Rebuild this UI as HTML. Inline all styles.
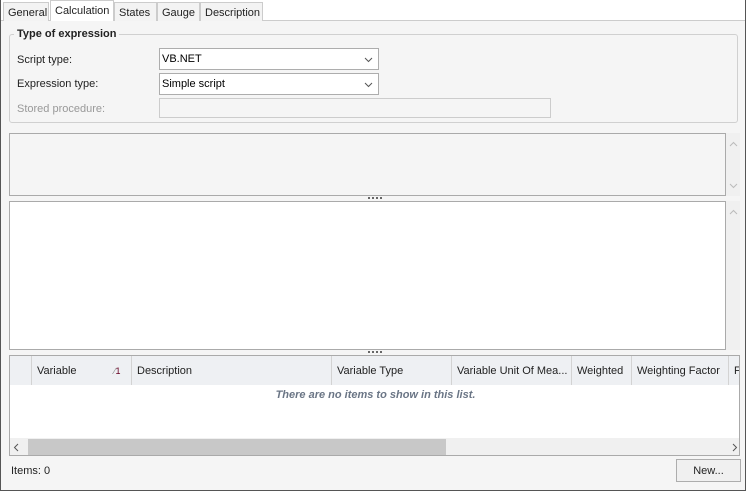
<!DOCTYPE html><html><head><style>
*{box-sizing:border-box;margin:0;padding:0}
body{width:746px;height:491px;position:relative;overflow:hidden;background:#fff;font:11px "Liberation Sans",sans-serif;color:#222}
.a{position:absolute}
.tab{position:absolute;top:2px;height:19px;border:1px solid #ccc;border-bottom:none;background:#f3f3f3;padding:4px 0 0 4px;font-size:11px}
.lbl{position:absolute;left:17px;font-size:11px}
.cb{position:absolute;left:159px;width:220px;height:22px;border:1px solid #adadad;background:#fff;padding:4px 0 0 2px;font-size:11px;color:#000}
.cb svg{position:absolute;right:5px;top:8px}
.hd{position:absolute;top:0;height:29px;border-right:1px solid #d3d3d3;padding:9px 0 0 5px;font-size:11px;white-space:nowrap;overflow:hidden}
.dots{position:absolute;left:368px;width:14px;height:2px;background:repeating-linear-gradient(90deg,#666 0 2px,transparent 2px 4px)}
</style></head><body>
<div class="a" style="left:0;top:0;width:746px;height:491px;border:1px solid #555;border-top:none"></div>
<div class="a" style="left:1px;top:20px;width:744px;height:470px;background:#f5f5f5;border-top:1px solid #ccc"></div>
<div class="tab" style="left:3px;width:46px">General</div>
<div class="tab" style="left:50px;width:64px;top:0;height:21px;background:#fff;padding-top:4px">Calculation</div>
<div class="tab" style="left:114px;width:43px">States</div>
<div class="tab" style="left:157px;width:43px">Gauge</div>
<div class="tab" style="left:200px;width:63px">Description</div>
<div class="a" style="left:9px;top:34px;width:729px;height:89px;border:1px solid #d0d0d0;border-radius:3px"></div>
<div class="a" style="left:14px;top:28px;background:#f5f5f5;padding:0 3px;font-weight:bold;font-size:11px">Type of expression</div>
<div class="lbl" style="top:54px">Script type:</div>
<div class="lbl" style="top:78px">Expression type:</div>
<div class="lbl" style="top:103px;color:#999">Stored procedure:</div>
<div class="cb" style="top:48px">VB.NET<svg width="9" height="6"><path d="M1 1l3.5 3.5L8 1" stroke="#555" fill="none"/></svg></div>
<div class="cb" style="top:73px">Simple script<svg width="9" height="6"><path d="M1 1l3.5 3.5L8 1" stroke="#555" fill="none"/></svg></div>
<div class="a" style="left:159px;top:98px;width:392px;height:20px;border:1px solid #ccc;background:#f5f5f5"></div>
<div class="a" style="left:9px;top:133px;width:717px;height:63px;border:1px solid #aaa;background:#f5f5f5"></div>
<div class="a" style="left:726px;top:133px;width:14px;height:63px;background:#f0f0f0"><svg class="a" style="left:3px;top:8px" width="9" height="6"><path d="M1 5l3.5-3.5L8 5" stroke="#bbb" fill="none"/></svg><svg class="a" style="left:3px;top:50px" width="9" height="6"><path d="M1 1l3.5 3.5L8 1" stroke="#bbb" fill="none"/></svg></div>
<div class="dots" style="top:197px"></div>
<div class="a" style="left:9px;top:201px;width:717px;height:149px;border:1px solid #aaa;background:#fff"></div>
<div class="a" style="left:726px;top:201px;width:14px;height:149px;background:#f0f0f0"><svg class="a" style="left:3px;top:8px" width="9" height="6"><path d="M1 5l3.5-3.5L8 5" stroke="#bbb" fill="none"/></svg></div>
<div class="dots" style="top:351px"></div>
<div class="a" style="left:9px;top:355px;width:731px;height:101px;border:1px solid #aaa;background:#fff;overflow:hidden">
 <div class="a" style="left:0;top:0;width:731px;height:29px;background:#eef0f3"></div>
 <div class="hd" style="left:0;width:22px"></div>
 <div class="hd" style="left:22px;width:100px">Variable<span style="position:absolute;left:82px;top:10px;font-size:9px;color:#888">∕<span style="color:#602">1</span></span></div>
 <div class="hd" style="left:122px;width:200px">Description</div>
 <div class="hd" style="left:322px;width:120px">Variable Type</div>
 <div class="hd" style="left:442px;width:120px">Variable Unit Of Mea...</div>
 <div class="hd" style="left:562px;width:60px">Weighted</div>
 <div class="hd" style="left:622px;width:97px">Weighting Factor</div>
 <div class="hd" style="left:719px;width:20px">Fa</div>
 <div class="a" style="left:0;top:33px;width:731px;text-align:center;font-style:italic;font-weight:bold;color:#6a7585;font-size:11px">There are no items to show in this list.</div>
 <div class="a" style="left:0;top:82px;width:731px;height:18px;background:#f0f0f0"></div>
 <div class="a" style="left:18px;top:83px;width:418px;height:16px;background:#c8c8c8"></div>
 <svg class="a" style="left:3px;top:87px" width="6" height="9"><path d="M5 1L1.5 4.5 5 8" stroke="#555" fill="none"/></svg>
 <svg class="a" style="left:722px;top:87px" width="6" height="9"><path d="M1 1l3.5 3.5L1 8" stroke="#555" fill="none"/></svg>
</div>
<div class="a" style="left:11px;top:465px;font-size:11px">Items: 0</div>
<div class="a" style="left:676px;top:459px;width:65px;height:23px;border:1px solid #adadad;background:#f0f0f0;text-align:center;padding-top:5px;font-size:11px">New...</div>
</body></html>
